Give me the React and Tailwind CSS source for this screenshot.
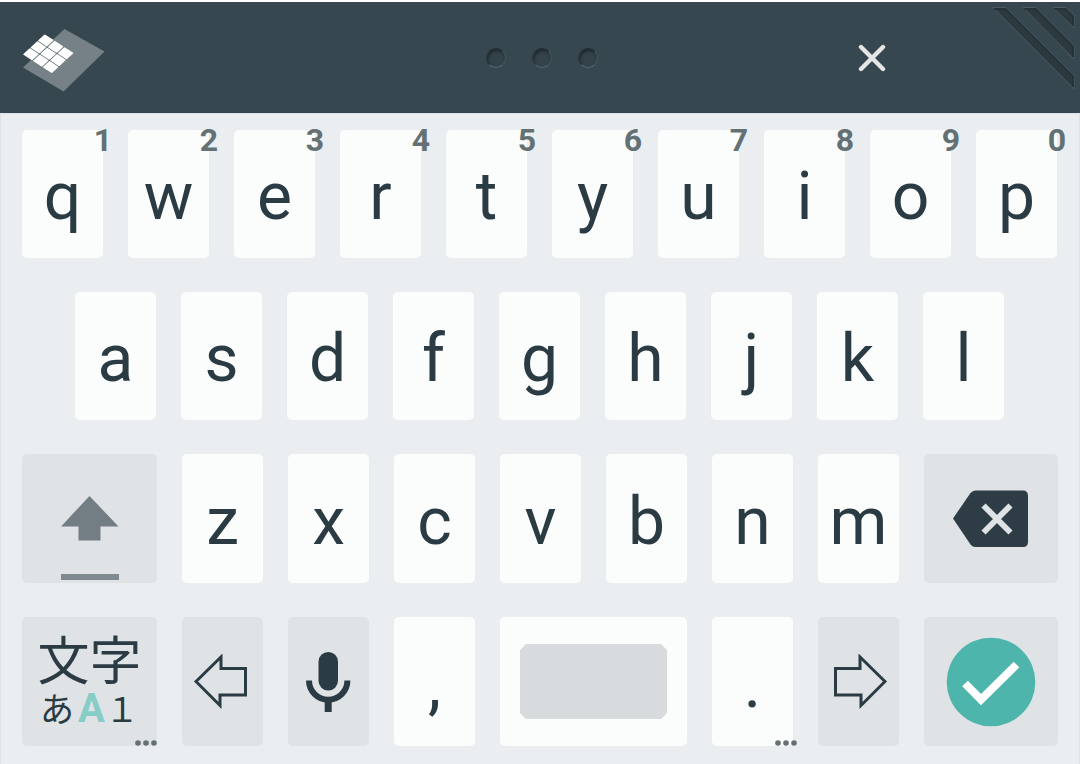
const row1 = [
  ['q', '1'], ['w', '2'], ['e', '3'], ['r', '4'], ['t', '5'],
  ['y', '6'], ['u', '7'], ['i', '8'], ['o', '9'], ['p', '0'],
];
const row2 = ['a', 's', 'd', 'f', 'g', 'h', 'j', 'k', 'l'];
const row3 = ['z', 'x', 'c', 'v', 'b', 'n', 'm'];

function LetterKey({ children, hint, more }) {
  return (
    <button
      type="button"
      className="relative min-w-0 flex-[81] rounded-[5px] bg-[#fbfdfc] pt-[6px] text-[66px] leading-none text-[#2a3b43]"
    >
      {children}
      {hint && (
        <span className="absolute -top-[6px] right-0 translate-x-1/2 text-[32px] leading-8 font-bold text-[#637074]">
          {hint}
        </span>
      )}
      {more && <MoreDots className="absolute bottom-0 -right-1" />}
    </button>
  );
}

function ActionKey({ label, className = 'flex-[81] items-center bg-[#dfe3e6]', children }) {
  return (
    <button
      type="button"
      aria-label={label}
      className={`relative flex min-w-0 justify-center rounded-[5px] text-[#2a3b43] ${className}`}
    >
      {children}
    </button>
  );
}

function MoreDots({ className }) {
  return (
    <svg width="22" height="6" viewBox="0 0 22 6" fill="#637074" className={className}>
      <circle cx="3" cy="3" r="2.8" />
      <circle cx="11" cy="3" r="2.8" />
      <circle cx="19" cy="3" r="2.8" />
    </svg>
  );
}

function Logo() {
  const steps = [0, 1, 2];
  return (
    <svg width="84" height="66" viewBox="0 0 84 66">
      <path d="M1 40.5 42.5 2 82.5 24.5 41.5 64.5Z" fill="#768187" />
      <path d="M1 27.5 22.5 8 51 25.5 29.5 46.5Z" fill="#5f6c72" />
      <g transform="matrix(21.5 -20 28.5 18.5 1 27.5)" fill="#fff">
        {steps.map((i) =>
          steps.map((j) => (
            <rect key={`${i}${j}`} x={i * 0.345} y={j * 0.345} width="0.32" height="0.32" rx="0.02" />
          ))
        )}
      </g>
    </svg>
  );
}

function Stripes() {
  return (
    <svg width="83" height="84" viewBox="0 0 83 84" className="mt-[5px] mr-[5px]">
      <g stroke="#4b5a61" strokeWidth="1" fill="#2c393f">
        <path d="M1 .5H14L82 68.5V82Z" />
        <path d="M31 .5H44L82 38.5V52Z" />
        <path d="M61 .5H74L82 8.5V21Z" />
      </g>
      <g stroke="#253137" strokeWidth="1.5" fill="none">
        <path d="M2 2H13.5L81 69.500V80" />
        <path d="M32 2H43.5L81 39.500V50" />
        <path d="M62 2H73.5L81 9.500V19" />
      </g>
    </svg>
  );
}

function Header() {
  return (
    <header className="grid h-[111px] grid-cols-3 items-center bg-[#37474f]">
      <button type="button" aria-label="Layouts" className="ml-[22px] justify-self-start pt-1">
        <Logo />
      </button>
      <button type="button" aria-label="Pages" className="flex gap-[26px] justify-self-center pl-1">
        {[0, 1, 2].map((n) => (
          <span
            key={n}
            className="size-5 rounded-full border border-t-[#222d32] border-r-[#46565d] border-b-[#5b6a71] border-l-[#2a363c] bg-[#34434b] shadow-[inset_1px_2px_3px_#1d272c]"
          />
        ))}
      </button>
      <div className="flex h-full items-center justify-between">
        <button type="button" aria-label="Close" className="ml-[120px] flex h-16 w-16 items-center justify-center">
          <svg width="28" height="28" viewBox="0 0 28 28" stroke="#e6e6e6" strokeWidth="4.4" strokeLinecap="round">
            <path d="M3 3 25 25M25 3 3 25" />
          </svg>
        </button>
        <div className="self-start">
          <Stripes />
        </div>
      </div>
    </header>
  );
}

function Arrow({ className }) {
  return (
    <svg width="54" height="56" viewBox="0 0 54 56" fill="none" stroke="currentColor" strokeWidth="3" className={className}>
      <path d="M2 27.5 27 3V14.5H51.5V41H26V51.5Z" />
    </svg>
  );
}

export default function App() {
  return (
    <div className="min-h-screen bg-white pt-[2px] font-[Roboto,'Noto_Sans_CJK_JP',sans-serif]">
      <Header />
      <main className="flex min-h-[calc(100vh-113px)] flex-col gap-[34px] border border-b-0 border-[#dfe3e6] bg-[#ebeef1] px-[21px] pt-4 pb-[18px]">
        <div className="flex h-32 gap-[25px] pr-px">
          {row1.map(([letter, hint]) => (
            <LetterKey key={letter} hint={hint}>{letter}</LetterKey>
          ))}
        </div>

        <div className="flex h-32 gap-[25px] pr-[54px] pl-[53px]">
          {row2.map((letter) => (
            <LetterKey key={letter}>{letter}</LetterKey>
          ))}
        </div>

        <div className="flex h-[129px] gap-[25px]">
          <ActionKey label="Shift" className="flex-[135] items-end bg-[#dfe3e6] pb-[3px]">
            <svg width="58" height="84" viewBox="0 0 58 84" fill="#727e83">
              <path d="M28.5 0 57.5 30.5H39.5V44.5H17.5V30.5H0Z" />
              <path d="M0 78H58V84H0Z" fill="#7f8b90" />
            </svg>
          </ActionKey>
          {row3.map((letter) => (
            <LetterKey key={letter}>{letter}</LetterKey>
          ))}
          <ActionKey label="Backspace" className="flex-[134] items-center bg-[#dfe3e6]">
            <svg width="76" height="58" viewBox="0 0 76 58">
              <path d="M0 28.5 17.5 3Q19.5 .5 22.5 .5H70Q75 .5 75 6V52Q75 57 70 57H22.5Q19.5 57 17.5 54.5Z" fill="#2d3c45" />
              <path d="M30.5 15.5 57.5 42.5M57.5 15.5 30.5 42.5" stroke="#dfe3e6" strokeWidth="5.8" />
            </svg>
          </ActionKey>
        </div>

        <div className="flex h-[129px] gap-[25px]">
          <ActionKey label="Input mode" className="flex-[135] flex-col items-center bg-[#dfe3e6]">
            <span className="text-[52px] leading-[56px]">文字</span>
            <span className="flex items-baseline text-[34px] leading-9">
              <span className="mr-1">あ</span>
              <span className="text-[40px] font-bold text-[#87cdc6]">A</span>
              <span>１</span>
            </span>
            <MoreDots className="absolute right-0 bottom-0" />
          </ActionKey>
          <ActionKey label="Left">
            <Arrow className="mr-1" />
          </ActionKey>
          <ActionKey label="Voice input">
            <svg width="46" height="62" viewBox="0 0 46 62" className="mr-[2px]">
              <rect x="13.5" y="1" width="19.5" height="38.5" rx="9.7" fill="currentColor" />
              <path d="M4 29.5A19.2 19.2 0 0 0 42.4 29.5" fill="none" stroke="currentColor" strokeWidth="6" />
              <path d="M23.2 49V61" stroke="currentColor" strokeWidth="7" />
            </svg>
          </ActionKey>
          <LetterKey>,</LetterKey>
          <ActionKey label="Space" className="flex-[187] items-center bg-[#fbfdfc]">
            <span className="mx-5 h-[75px] flex-1 bg-[#d8dbde] [clip-path:polygon(6px_0,calc(100%-6px)_0,100%_6px,100%_calc(100%-6px),calc(100%-6px)_100%,6px_100%,0_calc(100%-6px),0_6px)]" />
          </ActionKey>
          <LetterKey more>.</LetterKey>
          <ActionKey label="Right">
            <Arrow className="ml-[2px] -scale-x-100" />
          </ActionKey>
          <ActionKey label="Done" className="flex-[134] items-center bg-[#dfe3e6]">
            <svg width="90" height="90" viewBox="0 0 90 90">
              <circle cx="45" cy="45" r="44.3" fill="#4db5ac" />
              <path d="M19 46.5 35 62.5 70.5 27.5" fill="none" stroke="#fff" strokeWidth="8" />
            </svg>
          </ActionKey>
        </div>
      </main>
    </div>
  );
}
